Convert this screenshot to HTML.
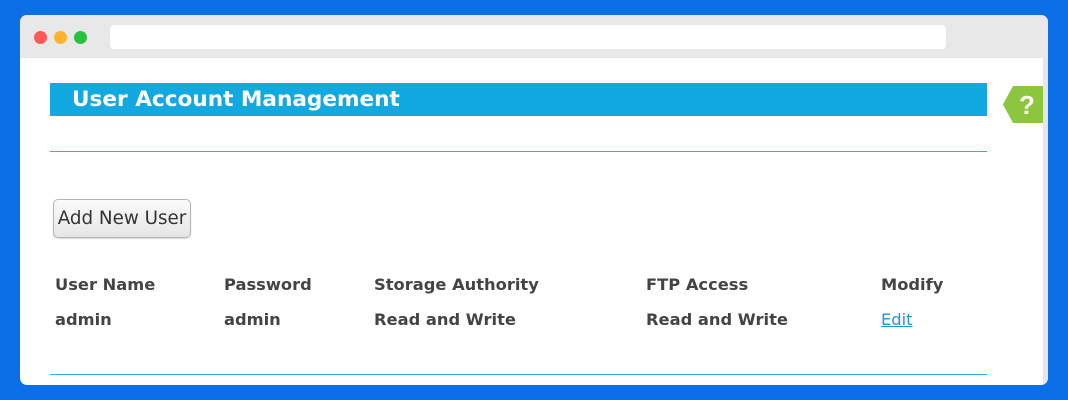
<!DOCTYPE html>
<html><head><style>
body{margin:0;width:1068px;height:400px;background:#0c6fe8;position:relative;overflow:hidden;font-family:"DejaVu Sans","Liberation Sans",sans-serif}
.win{position:absolute;left:20px;top:15px;width:1028px;height:370px;background:#fff;border-radius:7px;overflow:hidden}
.tb{position:absolute;left:0;top:0;width:100%;height:43px;background:#e8e8e8}
.dot{position:absolute;top:16px;width:13px;height:13px;border-radius:50%}
.url{position:absolute;left:90px;top:10px;width:836px;height:24px;background:#fff;border-radius:4px}
.sb{position:absolute;right:0;top:43px;width:5px;bottom:0;background:#e6e6e6}
.hdr{position:absolute;left:30px;top:68px;width:937px;height:33px;background:#12a9e0;color:#fff;font-weight:bold;font-size:21.6px;line-height:33px;padding-left:22px;box-sizing:border-box}
.ln{position:absolute;left:30px;width:937px;height:1px;background:#2eaeea}
.btn{position:absolute;left:33px;top:184px;width:136px;height:37px;border:1px solid #b5b5b5;border-radius:5px;background:linear-gradient(#fafafa,#e6e6e6);font-size:18.3px;color:#333;line-height:37px;text-align:center;box-shadow:0 1px 1px rgba(0,0,0,.15)}
.c{position:absolute;font-size:16.3px;font-weight:bold;color:#444;white-space:nowrap}
a{color:#1a9ad6;font-weight:normal;text-decoration:underline}
</style></head><body>
<div class="win">
<div class="tb"><div class="dot" style="left:14px;background:#fd5a55"></div><div class="dot" style="left:34px;background:#fdb42c"></div><div class="dot" style="left:54px;background:#27c13f"></div><div class="url"></div></div>
<div class="sb"></div>
<div class="hdr">User Account Management</div>
<svg style="position:absolute;left:983px;top:71px" width="40" height="37"><polygon points="0,18.5 10,0 40,0 40,37 10,37" fill="#8cc63f"/><text x="24" y="28" font-size="26" font-weight="bold" fill="#fff" font-family="Liberation Sans,sans-serif" text-anchor="middle">?</text></svg>
<div class="ln" style="top:136px"></div>
<div class="btn">Add New User</div>
<div class="c" style="left:35px;top:260px">User Name</div>
<div class="c" style="left:204px;top:260px">Password</div>
<div class="c" style="left:354px;top:260px">Storage Authority</div>
<div class="c" style="left:626px;top:260px">FTP Access</div>
<div class="c" style="left:861px;top:260px">Modify</div>
<div class="c" style="left:35px;top:295px">admin</div>
<div class="c" style="left:204px;top:295px">admin</div>
<div class="c" style="left:354px;top:295px">Read and Write</div>
<div class="c" style="left:626px;top:295px">Read and Write</div>
<div class="c" style="left:861px;top:295px"><a>Edit</a></div>
<div class="ln" style="top:359px"></div>
</div>
</body></html>
